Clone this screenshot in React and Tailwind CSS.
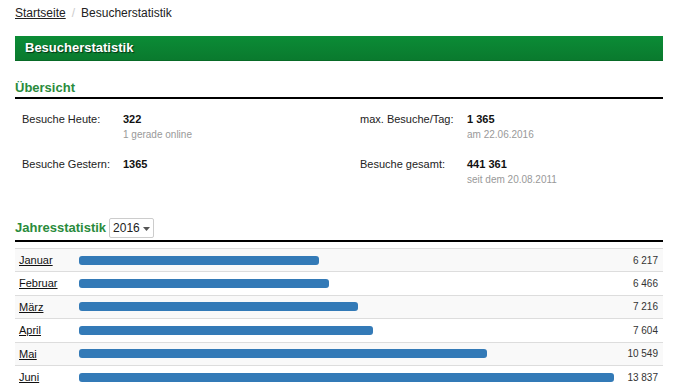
const months = [
  { name: "Januar", value: 6217 },
  { name: "Februar", value: 6466 },
  { name: "März", value: 7216 },
  { name: "April", value: 7604 },
  { name: "Mai", value: 10549 },
  { name: "Juni", value: 13837 },
];

const fmt = (n) => n.toLocaleString("de-DE").replace(/\./g, " ");

const Stat = ({ label, value, sub, labelW }) => (
  <div className="flex h-[45px]">
    <div className={`${labelW} shrink-0 text-[11px] text-[#222] leading-[16px]`}>{label}</div>
    <div>
      <div className="text-[11px] font-bold text-[#111] leading-[16px]">{value}</div>
      {sub && <div className="text-[10px] text-[#999] leading-[16px]">{sub}</div>}
    </div>
  </div>
);

export default function App() {
  return (
    <div className="w-[684px] h-[385px] overflow-hidden bg-white font-['Liberation_Sans',Arial,sans-serif]">
      <div className="ml-[15px] w-[648px]">
        {/* Breadcrumb */}
        <div className="flex items-center h-[25px] text-[12px] text-[#222]">
          <span className="underline">Startseite</span>
          <span className="mx-[6px] text-[#ccc]">/</span>
          <span>Besucherstatistik</span>
        </div>

        {/* Title bar */}
        <div className="mt-[11px] h-[25px] flex items-center px-[10px] bg-gradient-to-b from-[#0b8c36] to-[#0a7a2e] border-b border-[#086a27]">
          <h1 className="text-white font-bold text-[13px] [text-shadow:1px_1px_1px_rgba(0,0,0,0.6)]">
            Besucherstatistik
          </h1>
        </div>

        {/* Übersicht */}
        <h2 className="mt-[20px] text-[13px] font-bold text-[#2a8b3c] leading-none pb-[3px] border-b-2 border-black">
          Übersicht
        </h2>
        <div className="grid grid-cols-2 pt-[12px]">
          <div className="pl-[7px]">
            <Stat label="Besuche Heute:" value="322" sub="1 gerade online" labelW="w-[101px]" />
            <Stat label="Besuche Gestern:" value="1365" labelW="w-[101px]" />
          </div>
          <div className="pl-[21px]">
            <Stat label="max. Besuche/Tag:" value="1 365" sub="am 22.06.2016" labelW="w-[107px]" />
            <Stat label="Besuche gesamt:" value="441 361" sub="seit dem 20.08.2011" labelW="w-[107px]" />
          </div>
        </div>

        {/* Jahresstatistik */}
        <div className="mt-[17px] flex items-center gap-[3px] pb-[2px] border-b-2 border-black">
          <h2 className="text-[13px] font-bold text-[#2a8b3c]">Jahresstatistik</h2>
          <div className="h-[20px] flex items-center gap-[3px] px-[3px] border border-[#ccc] rounded-[2px] text-[12px] text-[#222]">
            2016
            <svg width="7" height="4" viewBox="0 0 7 4" className="mt-[1px]">
              <path d="M0 0h7L3.5 4z" fill="#555" />
            </svg>
          </div>
        </div>

        <div className="mt-[6px]">
          {months.map((m, i) => (
            <div
              key={m.name}
              className={`flex items-center h-[23.4px] border-t border-[#ddd] ${i % 2 === 0 ? "bg-[#f9f9f9]" : "bg-white"}`}
            >
              <span className="w-[64px] pl-[4px] shrink-0 text-[11px] text-[#111] underline">{m.name}</span>
              <div className="w-[535px] shrink-0">
                <div
                  className="h-[9px] rounded-[3px] bg-[#337ab7]"
                  style={{ width: `${(m.value / 13837) * 535}px` }}
                />
              </div>
              <span className="flex-1 text-right pr-[5px] text-[10px] text-[#333]">{fmt(m.value)}</span>
            </div>
          ))}
        </div>
      </div>
    </div>
  );
}
